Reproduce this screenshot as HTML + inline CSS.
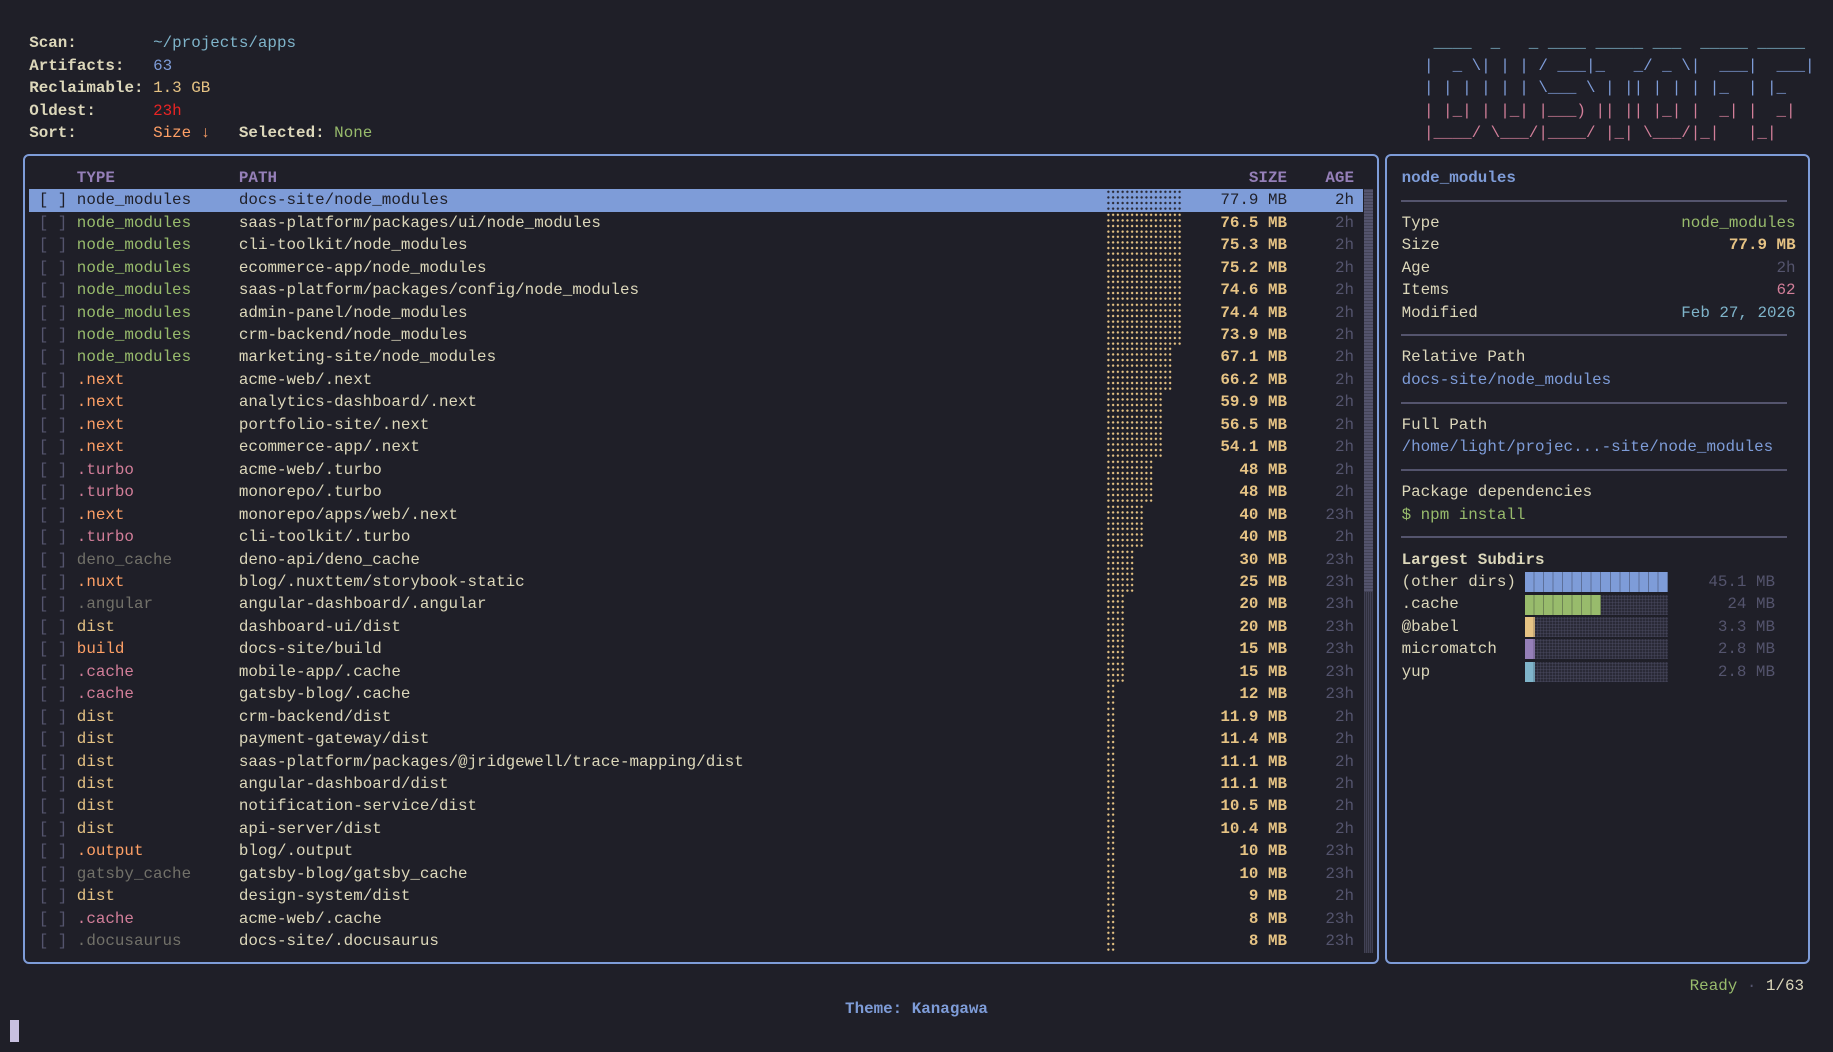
<!DOCTYPE html>
<html><head><meta charset="utf-8">
<style>
*{margin:0;padding:0;box-sizing:border-box}
html,body{width:1833px;height:1052px;background:#1f1f28;overflow:hidden}
body{position:relative;font-family:"Liberation Mono","DejaVu Sans Mono",monospace;font-size:15.88px;color:#dcd7ba}
.l{position:absolute;white-space:pre;height:22.45px;line-height:22.45px}
.r{position:absolute;left:0;width:1833px;height:22.45px;line-height:22.45px;white-space:pre}
.r i{position:absolute;font-style:normal;top:0}
.cb{left:38.7px;color:#54546d}
.t{left:76.8px}
.p{left:238.9px}
.s{right:546px;font-weight:bold;color:#e6c384}
.a{right:479px;color:#54546d}
.bar{position:absolute;left:1106px;top:0;height:22.45px;background-image:radial-gradient(circle,#e6c384 1.05px,transparent 1.35px);background-size:4.765px 5.61px;background-position:0 0}
.g{color:#98bb6c}.o{color:#ffa066}.pk{color:#d27e99}.gr{color:#727169}.y{color:#e6c384}
b{font-weight:bold}
.box{position:absolute;border:2px solid #7e9cd8;border-radius:6px}
.sep{position:absolute;left:1401px;width:386px;height:2px;background:#54546d}
.rp{position:absolute;left:1401.6px;width:394px;height:22.45px;line-height:22.45px;white-space:pre}
.rp .v{position:absolute;right:0;top:0}
.sb{position:absolute;left:1525.4px;width:143px;height:20px;background:#2a2a37;background-image:repeating-linear-gradient(90deg,rgba(84,84,109,.35) 0 1px,transparent 1px 3px),repeating-linear-gradient(0deg,rgba(84,84,109,.35) 0 1px,transparent 1px 3px)}
.sb span{position:absolute;left:0;top:0;height:20px;background-image:repeating-linear-gradient(90deg,transparent 0 8.53px,rgba(31,31,40,.35) 8.53px 9.53px)}
.sv{position:absolute;right:58px;color:#54546d;white-space:pre;height:22.45px;line-height:22.45px}
</style></head><body>

<div class="l" style="left:29.2px;top:32.15px"><b>Scan:</b></div><div class="l" style="left:153.1px;top:32.15px;color:#7fb4ca">~/projects/apps</div>
<div class="l" style="left:29.2px;top:54.6px"><b>Artifacts:</b></div><div class="l" style="left:153.1px;top:54.6px;color:#7e9cd8">63</div>
<div class="l" style="left:29.2px;top:77.05px"><b>Reclaimable:</b></div><div class="l" style="left:153.1px;top:77.05px;color:#e6c384">1.3 GB</div>
<div class="l" style="left:29.2px;top:99.5px"><b>Oldest:</b></div><div class="l" style="left:153.1px;top:99.5px;color:#e82424">23h</div>
<div class="l" style="left:29.2px;top:121.95px"><b>Sort:</b></div><div class="l" style="left:153.1px;top:121.95px;color:#ffa066">Size ↓</div>
<div class="l" style="left:238.9px;top:121.95px"><b>Selected:</b> <span class="g">None</span></div>

<div class="l" style="left:1424px;top:32.15px;color:#7fb4ca"> ____  _   _ ____ _____ ___  _____ _____</div>
<div class="l" style="left:1424px;top:54.6px;color:#7e9cd8">|  _ \| | | / ___|_   _/ _ \|  ___|  ___|</div>
<div class="l" style="left:1424px;top:77.05px;color:#7e9cd8">| | | | | | \___ \ | || | | | |_  | |_</div>
<div class="l" style="left:1424px;top:99.5px;color:#d27e99">| |_| | |_| |___) || || |_| |  _| |  _|</div>
<div class="l" style="left:1424px;top:121.95px;color:#d27e99">|____/ \___/|____/ |_| \___/|_|   |_|</div>

<div class="box" style="left:23px;top:154px;width:1356px;height:810px"></div>
<div class="box" style="left:1385px;top:154px;width:425px;height:810px"></div>

<!-- scrollbar -->
<div style="position:absolute;left:1363.5px;top:189.3px;width:9.5px;height:763.3px;background:#2f2f3d;background-image:repeating-linear-gradient(90deg,rgba(84,84,109,.5) 0 1px,transparent 1px 2px)"></div>
<div style="position:absolute;left:1363.5px;top:189.3px;width:9.5px;height:403px;background:#54546d;background-image:repeating-linear-gradient(0deg,rgba(31,31,40,.3) 0 1px,transparent 1px 3px)"></div>

<div class="r" style="top:166.85px"><i class="t" style="color:#957fb8;font-weight:bold">TYPE</i><i class="p" style="color:#957fb8;font-weight:bold">PATH</i><i class="s" style="color:#957fb8">SIZE</i><i class="a" style="color:#957fb8;font-weight:bold">AGE</i></div>

<div style="position:absolute;left:29.2px;top:189.3px;width:1334px;height:22.45px;background:#7e9cd8"></div>
<div class="r" style="top:189.3px;color:#1f1f28"><i class="cb" style="color:#1f1f28">[ ]</i><i class="t">node_modules</i><i class="p">docs-site/node_modules</i><b class="bar" style="width:76.2px;background-image:radial-gradient(circle,#2a2a37 1.05px,transparent 1.35px)"></b><i class="s" style="color:#1f1f28;font-weight:normal">77.9 MB</i><i class="a" style="color:#1f1f28">2h</i></div>

<div class="r" style="top:211.75px"><i class="cb">[ ]</i><i class="t g">node_modules</i><i class="p">saas-platform/packages/ui/node_modules</i><b class="bar" style="width:76.2px"></b><i class="s">76.5 MB</i><i class="a">2h</i></div>
<div class="r" style="top:234.2px"><i class="cb">[ ]</i><i class="t g">node_modules</i><i class="p">cli-toolkit/node_modules</i><b class="bar" style="width:76.2px"></b><i class="s">75.3 MB</i><i class="a">2h</i></div>
<div class="r" style="top:256.65px"><i class="cb">[ ]</i><i class="t g">node_modules</i><i class="p">ecommerce-app/node_modules</i><b class="bar" style="width:76.2px"></b><i class="s">75.2 MB</i><i class="a">2h</i></div>
<div class="r" style="top:279.1px"><i class="cb">[ ]</i><i class="t g">node_modules</i><i class="p">saas-platform/packages/config/node_modules</i><b class="bar" style="width:76.2px"></b><i class="s">74.6 MB</i><i class="a">2h</i></div>
<div class="r" style="top:301.55px"><i class="cb">[ ]</i><i class="t g">node_modules</i><i class="p">admin-panel/node_modules</i><b class="bar" style="width:76.2px"></b><i class="s">74.4 MB</i><i class="a">2h</i></div>
<div class="r" style="top:324px"><i class="cb">[ ]</i><i class="t g">node_modules</i><i class="p">crm-backend/node_modules</i><b class="bar" style="width:76.2px"></b><i class="s">73.9 MB</i><i class="a">2h</i></div>
<div class="r" style="top:346.45px"><i class="cb">[ ]</i><i class="t g">node_modules</i><i class="p">marketing-site/node_modules</i><b class="bar" style="width:66.7px"></b><i class="s">67.1 MB</i><i class="a">2h</i></div>
<div class="r" style="top:368.9px"><i class="cb">[ ]</i><i class="t o">.next</i><i class="p">acme-web/.next</i><b class="bar" style="width:66.7px"></b><i class="s">66.2 MB</i><i class="a">2h</i></div>
<div class="r" style="top:391.35px"><i class="cb">[ ]</i><i class="t o">.next</i><i class="p">analytics-dashboard/.next</i><b class="bar" style="width:57.2px"></b><i class="s">59.9 MB</i><i class="a">2h</i></div>
<div class="r" style="top:413.8px"><i class="cb">[ ]</i><i class="t o">.next</i><i class="p">portfolio-site/.next</i><b class="bar" style="width:57.2px"></b><i class="s">56.5 MB</i><i class="a">2h</i></div>
<div class="r" style="top:436.25px"><i class="cb">[ ]</i><i class="t o">.next</i><i class="p">ecommerce-app/.next</i><b class="bar" style="width:57.2px"></b><i class="s">54.1 MB</i><i class="a">2h</i></div>
<div class="r" style="top:458.7px"><i class="cb">[ ]</i><i class="t pk">.turbo</i><i class="p">acme-web/.turbo</i><b class="bar" style="width:47.7px"></b><i class="s">48 MB</i><i class="a">2h</i></div>
<div class="r" style="top:481.15px"><i class="cb">[ ]</i><i class="t pk">.turbo</i><i class="p">monorepo/.turbo</i><b class="bar" style="width:47.7px"></b><i class="s">48 MB</i><i class="a">2h</i></div>
<div class="r" style="top:503.6px"><i class="cb">[ ]</i><i class="t o">.next</i><i class="p">monorepo/apps/web/.next</i><b class="bar" style="width:38.1px"></b><i class="s">40 MB</i><i class="a">23h</i></div>
<div class="r" style="top:526.05px"><i class="cb">[ ]</i><i class="t pk">.turbo</i><i class="p">cli-toolkit/.turbo</i><b class="bar" style="width:38.1px"></b><i class="s">40 MB</i><i class="a">2h</i></div>
<div class="r" style="top:548.5px"><i class="cb">[ ]</i><i class="t gr">deno_cache</i><i class="p">deno-api/deno_cache</i><b class="bar" style="width:28.6px"></b><i class="s">30 MB</i><i class="a">23h</i></div>
<div class="r" style="top:570.95px"><i class="cb">[ ]</i><i class="t o">.nuxt</i><i class="p">blog/.nuxttem/storybook-static</i><b class="bar" style="width:28.6px"></b><i class="s">25 MB</i><i class="a">23h</i></div>
<div class="r" style="top:593.4px"><i class="cb">[ ]</i><i class="t gr">.angular</i><i class="p">angular-dashboard/.angular</i><b class="bar" style="width:19.1px"></b><i class="s">20 MB</i><i class="a">23h</i></div>
<div class="r" style="top:615.85px"><i class="cb">[ ]</i><i class="t y">dist</i><i class="p">dashboard-ui/dist</i><b class="bar" style="width:19.1px"></b><i class="s">20 MB</i><i class="a">23h</i></div>
<div class="r" style="top:638.3px"><i class="cb">[ ]</i><i class="t o">build</i><i class="p">docs-site/build</i><b class="bar" style="width:19.1px"></b><i class="s">15 MB</i><i class="a">23h</i></div>
<div class="r" style="top:660.75px"><i class="cb">[ ]</i><i class="t pk">.cache</i><i class="p">mobile-app/.cache</i><b class="bar" style="width:19.1px"></b><i class="s">15 MB</i><i class="a">23h</i></div>
<div class="r" style="top:683.2px"><i class="cb">[ ]</i><i class="t pk">.cache</i><i class="p">gatsby-blog/.cache</i><b class="bar" style="width:9.5px"></b><i class="s">12 MB</i><i class="a">23h</i></div>
<div class="r" style="top:705.65px"><i class="cb">[ ]</i><i class="t y">dist</i><i class="p">crm-backend/dist</i><b class="bar" style="width:9.5px"></b><i class="s">11.9 MB</i><i class="a">2h</i></div>
<div class="r" style="top:728.1px"><i class="cb">[ ]</i><i class="t y">dist</i><i class="p">payment-gateway/dist</i><b class="bar" style="width:9.5px"></b><i class="s">11.4 MB</i><i class="a">2h</i></div>
<div class="r" style="top:750.55px"><i class="cb">[ ]</i><i class="t y">dist</i><i class="p">saas-platform/packages/@jridgewell/trace-mapping/dist</i><b class="bar" style="width:9.5px"></b><i class="s">11.1 MB</i><i class="a">2h</i></div>
<div class="r" style="top:773px"><i class="cb">[ ]</i><i class="t y">dist</i><i class="p">angular-dashboard/dist</i><b class="bar" style="width:9.5px"></b><i class="s">11.1 MB</i><i class="a">2h</i></div>
<div class="r" style="top:795.45px"><i class="cb">[ ]</i><i class="t y">dist</i><i class="p">notification-service/dist</i><b class="bar" style="width:9.5px"></b><i class="s">10.5 MB</i><i class="a">2h</i></div>
<div class="r" style="top:817.9px"><i class="cb">[ ]</i><i class="t y">dist</i><i class="p">api-server/dist</i><b class="bar" style="width:9.5px"></b><i class="s">10.4 MB</i><i class="a">2h</i></div>
<div class="r" style="top:840.35px"><i class="cb">[ ]</i><i class="t o">.output</i><i class="p">blog/.output</i><b class="bar" style="width:9.5px"></b><i class="s">10 MB</i><i class="a">23h</i></div>
<div class="r" style="top:862.8px"><i class="cb">[ ]</i><i class="t gr">gatsby_cache</i><i class="p">gatsby-blog/gatsby_cache</i><b class="bar" style="width:9.5px"></b><i class="s">10 MB</i><i class="a">23h</i></div>
<div class="r" style="top:885.25px"><i class="cb">[ ]</i><i class="t y">dist</i><i class="p">design-system/dist</i><b class="bar" style="width:9.5px"></b><i class="s">9 MB</i><i class="a">2h</i></div>
<div class="r" style="top:907.7px"><i class="cb">[ ]</i><i class="t pk">.cache</i><i class="p">acme-web/.cache</i><b class="bar" style="width:9.5px"></b><i class="s">8 MB</i><i class="a">23h</i></div>
<div class="r" style="top:930.15px"><i class="cb">[ ]</i><i class="t gr">.docusaurus</i><i class="p">docs-site/.docusaurus</i><b class="bar" style="width:9.5px"></b><i class="s">8 MB</i><i class="a">23h</i></div>

<!-- right panel -->
<div class="rp" style="top:166.85px;color:#7e9cd8;font-weight:bold">node_modules</div>
<div class="sep" style="top:199.5px"></div>
<div class="rp" style="top:211.75px">Type<span class="v g">node_modules</span></div>
<div class="rp" style="top:234.2px">Size<span class="v" style="color:#e6c384;font-weight:bold">77.9 MB</span></div>
<div class="rp" style="top:256.65px">Age<span class="v" style="color:#54546d">2h</span></div>
<div class="rp" style="top:279.1px">Items<span class="v pk">62</span></div>
<div class="rp" style="top:301.55px">Modified<span class="v" style="color:#7fb4ca">Feb 27, 2026</span></div>
<div class="sep" style="top:334.2px"></div>
<div class="rp" style="top:346.45px">Relative Path</div>
<div class="rp" style="top:368.9px;color:#7e9cd8">docs-site/node_modules</div>
<div class="sep" style="top:401.5px"></div>
<div class="rp" style="top:413.8px">Full Path</div>
<div class="rp" style="top:436.25px;color:#7e9cd8">/home/light/projec...-site/node_modules</div>
<div class="sep" style="top:468.9px"></div>
<div class="rp" style="top:481.15px">Package dependencies</div>
<div class="rp g" style="top:503.6px">$ npm install</div>
<div class="sep" style="top:536.3px"></div>
<div class="rp" style="top:548.5px;font-weight:bold">Largest Subdirs</div>
<div class="rp" style="top:570.95px">(other dirs)</div>
<div class="rp" style="top:593.4px">.cache</div>
<div class="rp" style="top:615.85px">@babel</div>
<div class="rp" style="top:638.3px">micromatch</div>
<div class="rp" style="top:660.75px">yup</div>
<div class="sb" style="top:572px"><span style="width:143px;background-color:#7e9cd8"></span></div>
<div class="sb" style="top:594.5px"><span style="width:76px;background-color:#98bb6c"></span></div>
<div class="sb" style="top:617px"><span style="width:9.5px;background-color:#e6c384"></span></div>
<div class="sb" style="top:639.4px"><span style="width:9.5px;background-color:#957fb8"></span></div>
<div class="sb" style="top:661.9px"><span style="width:9.5px;background-color:#7fb4ca"></span></div>
<div class="sv" style="top:570.95px">45.1 MB</div>
<div class="sv" style="top:593.4px">24 MB</div>
<div class="sv" style="top:615.85px">3.3 MB</div>
<div class="sv" style="top:638.3px">2.8 MB</div>
<div class="sv" style="top:660.75px">2.8 MB</div>

<!-- footer -->
<div class="l" style="right:29px;top:975.05px"><span class="g">Ready</span> <span style="color:#54546d">·</span> 1/63</div>
<div class="l" style="left:0;width:1833px;text-align:center;top:997.5px;color:#7e9cd8;font-weight:bold">Theme: Kanagawa</div>
<div style="position:absolute;left:9.5px;top:1019.95px;width:9.5px;height:22.45px;background:#c8c0e0"></div>
</body></html>
